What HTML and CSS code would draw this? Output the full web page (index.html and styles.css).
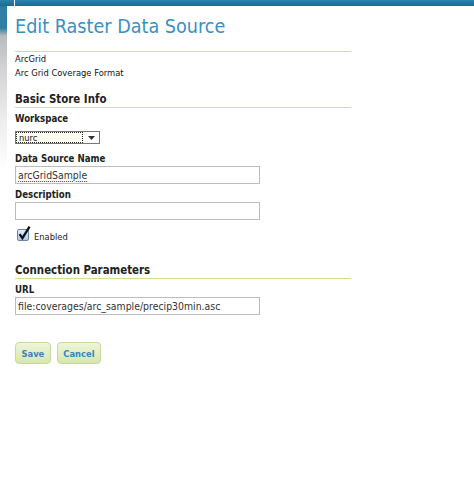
FILE: index.html
```html
<!DOCTYPE html>
<html>
<head>
<meta charset="utf-8">
<link rel="stylesheet" href="styles.css">
</head>
<body>
<div class="page">
  <div class="panel">
    <h1 class="title">Edit Raster Data Source</h1>
    <div class="meta">
      <div>ArcGrid</div>
      <div>Arc Grid Coverage Format</div>
    </div>
    <h2 class="section">Basic Store Info</h2>
    <div class="field">
      <label class="lbl">Workspace</label>
      <div class="select"><span class="sel-text">nurc</span><span class="sel-btn"><svg width="7" height="4" viewBox="0 0 7 4"><path d="M0 0h7L3.5 4z" fill="#333"/></svg></span></div>
    </div>
    <div class="field field-name">
      <label class="lbl">Data Source Name</label>
      <div class="input"><span class="spell">arcGridSample</span></div>
    </div>
    <div class="field">
      <label class="lbl">Description</label>
      <div class="input"></div>
    </div>
    <div class="check-row">
      <span class="checkbox"><svg width="14" height="15" viewBox="0 0 14 15"><defs><linearGradient id="cb" x1="0" y1="0" x2="0" y2="1"><stop offset="0" stop-color="#e3eefb"/><stop offset="1" stop-color="#a9c6ec"/></linearGradient></defs><rect x="0.5" y="3.5" width="11" height="11" rx="1.5" fill="url(#cb)" stroke="#6a86ab"/><path d="M2.6 8.2 L5.4 12.2 L12.6 0.6" fill="none" stroke="#111" stroke-width="2.3"/></svg></span>
      <span class="check-lbl">Enabled</span>
    </div>
    <h2 class="section section2">Connection Parameters</h2>
    <div class="field">
      <label class="lbl">URL</label>
      <div class="input">file:coverages/arc_sample/precip30min.asc</div>
    </div>
    <div class="buttons">
      <button class="btn">Save</button>
      <button class="btn">Cancel</button>
    </div>
  </div>
</div>
</body>
</html>
```
FILE: styles.css
```css
html, body {
  margin: 0;
  padding: 0;
  background: #fff;
}
.page {
  width: 474px;
  height: 499px;
  overflow: hidden;
  font-family: "DejaVu Sans Condensed", "Liberation Sans", sans-serif;
  font-stretch: condensed;
  color: #111;
  background:
    linear-gradient(#fff, #fff) 14px 0 / 1px 6px no-repeat,
    linear-gradient(to bottom, #2c84ad, #1f678c) 0 0 / 100% 6px no-repeat,
    linear-gradient(to bottom, #2a7ea6 0, #2f7fa3 28px, #b9bcbe 36px, #d4d4d4 70px, #ededed 120px, #fff 170px) 0 0 / 7px 100% no-repeat,
    #fff;
  padding-top: 6px;
  box-sizing: border-box;
}
.panel {
  margin-left: 7px;
  background: #fff;
  border-top-left-radius: 7px;
  padding: 8px 8px 0 8px;
  height: 493px;
  box-sizing: border-box;
}
.title {
  margin: 0;
  font-weight: normal;
  font-size: 19.6px;
  color: #3990c2;
  width: 336px;
  padding: 0 0 12px 0;
  border-bottom: 1px solid #c9e096;
  line-height: 25px;
}
.meta {
  font-size: 9.3px;
  line-height: 14px;
}
.section {
  margin: 12px 0 0 0;
  font-size: 11.4px;
  font-weight: bold;
  color: #222;
  width: 336px;
  border-bottom: 1px solid #c9e096;
  line-height: 15px;
}
.section2 {
  margin-top: 23px;
}
.field {
  margin-top: 4px;
}
.field-name {
  margin-top: 8px;
}
.lbl {
  display: block;
  font-size: 9.6px;
  font-weight: bold;
  color: #222;
  line-height: 14px;
}
.select {
  margin-top: 5px;
  width: 85px;
  height: 13px;
  box-sizing: border-box;
  border: 1px solid #777;
  display: flex;
  background: #fff;
  font-size: 9.3px;
}
.sel-text {
  flex: 1;
  outline: 1px dotted #222;
  outline-offset: -1px;
  padding-left: 3px;
  line-height: 11px;
  background: #fffdf2;
}
.sel-btn {
  width: 16px;
  display: flex;
  align-items: center;
  justify-content: center;
}
.input {
  width: 245px;
  height: 18px;
  box-sizing: border-box;
  border: 1px solid #bcbcbc;
  font-size: 10.4px;
  line-height: 16px;
  padding-left: 2px;
  color: #333;
}
.spell {
  text-decoration: underline dotted #d33;
  text-underline-offset: 2px;
}
.check-row {
  display: flex;
  align-items: flex-end;
  margin-top: 6px;
  margin-left: 2px;
  height: 14px;
}
.checkbox {
  display: block;
  width: 14px;
  height: 15px;
  margin-bottom: -1px;
}
.check-lbl {
  font-size: 9.3px;
  margin-left: 3px;
  line-height: 11px;
  margin-bottom: -2px;
  color: #222;
}
.buttons {
  display: flex;
  gap: 6px;
  margin-top: 27px;
}
.btn {
  font-family: "DejaVu Sans Condensed", "Liberation Sans", sans-serif;
  font-stretch: condensed;
  font-size: 9.3px;
  font-weight: bold;
  color: #3a84b6;
  background: linear-gradient(to bottom, #eef5d8, #d6e7b1);
  border: 1px solid #c6daa0;
  border-radius: 4px;
  height: 22px;
  padding: 0 5.5px;
}
```
